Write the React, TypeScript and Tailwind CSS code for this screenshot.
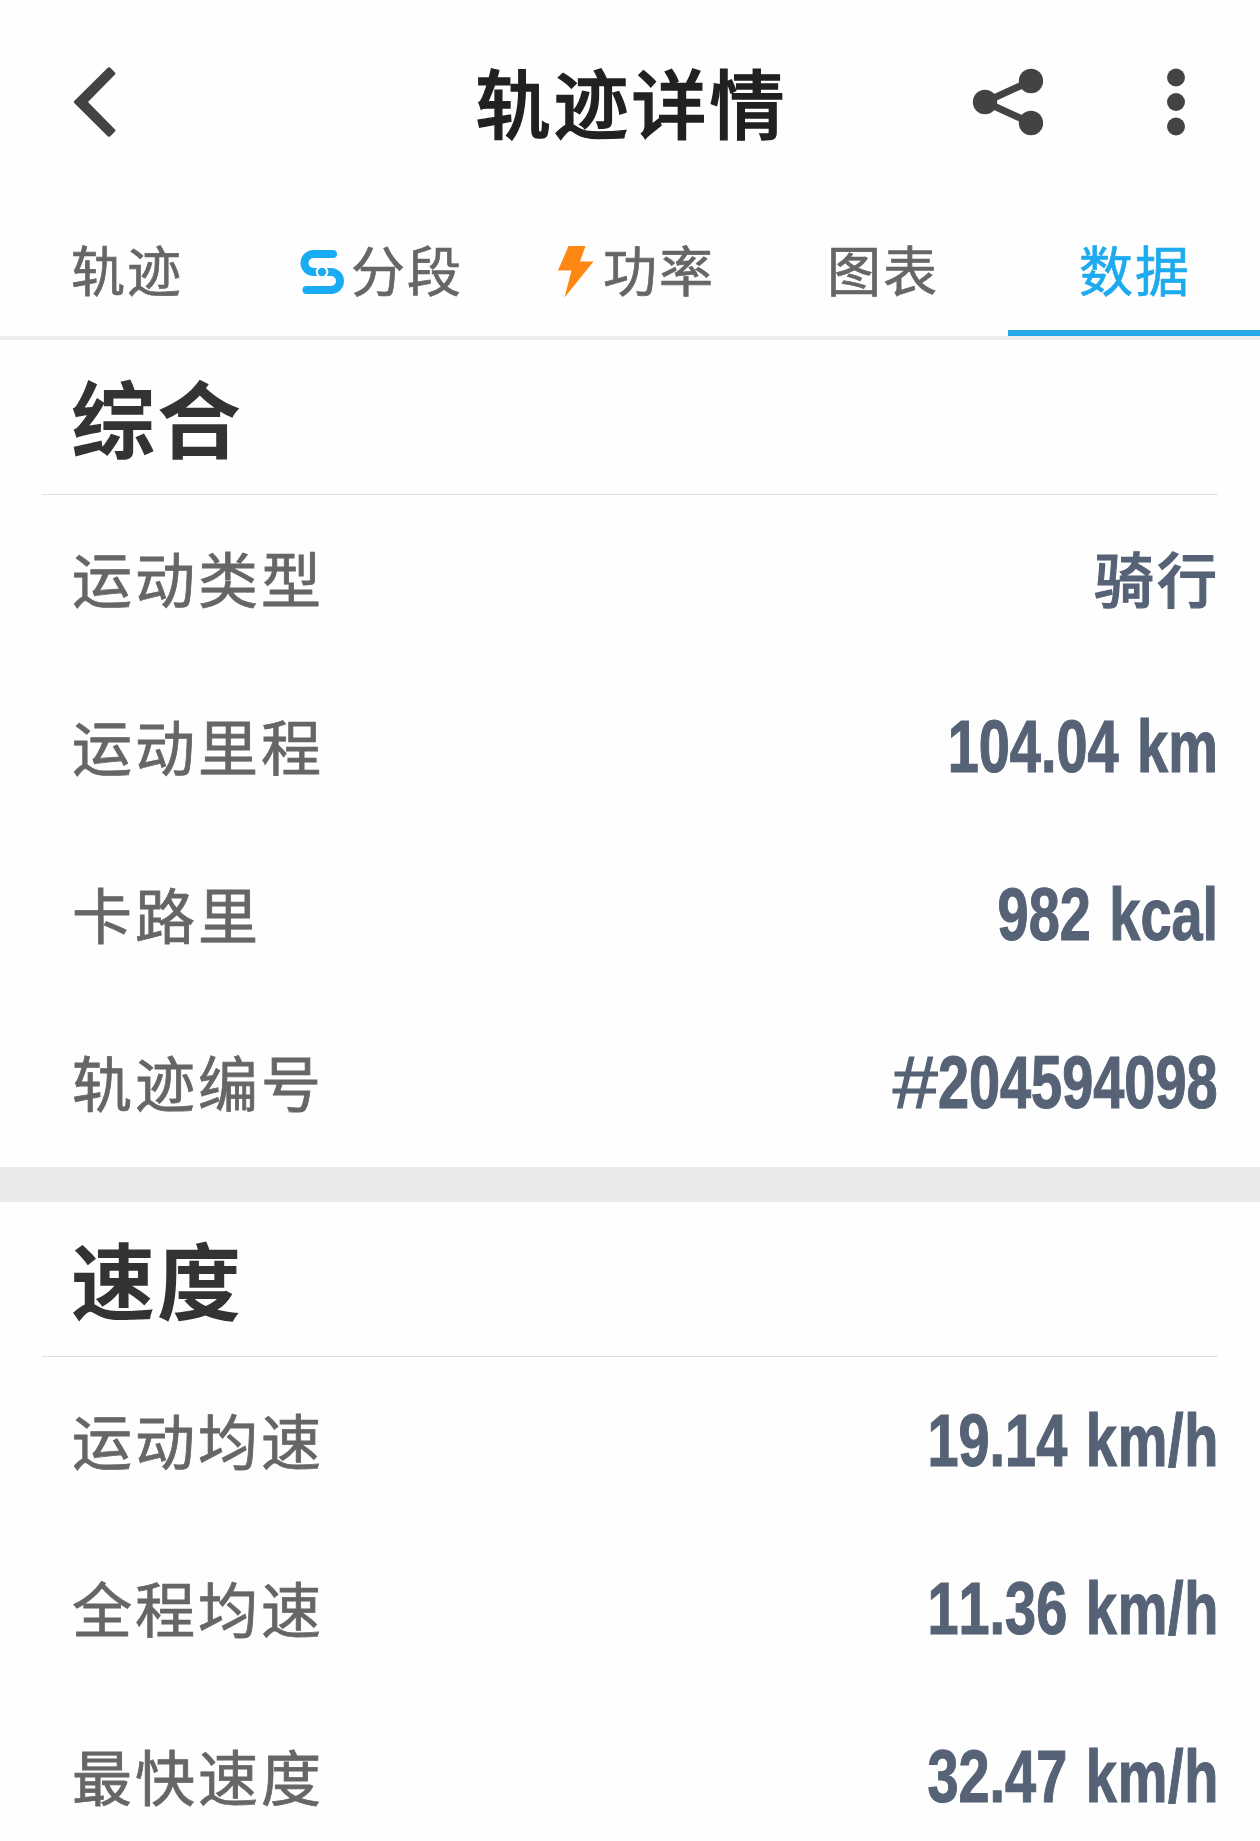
import React from 'react';

interface Stat {
  label: string;
  value: string;
  unit?: string;
}

const SUMMARY: Stat[] = [
  { label: '运动类型', value: '骑行' },
  { label: '运动里程', value: '104.04', unit: 'km' },
  { label: '卡路里', value: '982', unit: 'kcal' },
  { label: '轨迹编号', value: '#204594098' },
];

const SPEED: Stat[] = [
  { label: '运动均速', value: '19.14', unit: 'km/h' },
  { label: '全程均速', value: '11.36', unit: 'km/h' },
  { label: '最快速度', value: '32.47', unit: 'km/h' },
];

const SegmentIcon: React.FC = () => (
  <svg className="w-[54px] h-[54px]" viewBox="0 0 54 54" fill="none">
    <path d="M38 9H18.5a9 9 0 0 0 0 18H27h9a9 9 0 0 1 0 18H11.5" stroke="#1aacf2" strokeWidth="8" strokeLinecap="round" />
    <circle cx="27" cy="27" r="6.3" fill="#fff" />
    <circle cx="27" cy="27" r="4.2" fill="#1aacf2" />
  </svg>
);

const PowerIcon: React.FC = () => (
  <svg className="w-[54px] h-[54px]" viewBox="0 0 54 54">
    <path d="M21.5 1H38.5L33 16.5H46.5L17.5 52.5L24.5 25.5H11Z" fill="#ff8714" />
  </svg>
);

const TABS = [
  { label: '轨迹' },
  { label: '分段', icon: <SegmentIcon /> },
  { label: '功率', icon: <PowerIcon /> },
  { label: '图表' },
  { label: '数据', active: true },
];

const Header: React.FC = () => (
  <header className="grid grid-cols-3 items-center h-[204px] px-[72px]">
    <button className="w-fit">
      <svg className="w-[46px] h-[72px]" viewBox="0 0 46 72" fill="#434343">
        <path d="M36 1.6Q37 .7 38 1.6L43 6.6Q44 7.5 43 8.5L16 36L43 63.5Q44 64.5 43 65.4L38 70.4Q37 71.3 36 70.4L2.2 37Q1.2 36 2.2 35Z" />
      </svg>
    </button>
    <h1 className="pb-[4px] pl-[3px] text-center text-[75px] leading-none tracking-[3px] font-medium text-[#212121] whitespace-nowrap [-webkit-text-stroke:1.4px_#212121]">轨迹详情</h1>
    <div className="flex justify-end items-center gap-[121px]">
      <button>
        <svg className="w-[72px] h-[72px]" viewBox="0 0 72 72" fill="#434343">
          <path d="M60 15L14 36L60 57" fill="none" stroke="#434343" strokeWidth="7" />
          <circle cx="14" cy="36" r="12.2" />
          <circle cx="60" cy="15" r="12.2" />
          <circle cx="60" cy="57" r="12.2" />
        </svg>
      </button>
      <button>
        <svg className="w-[24px] h-[72px]" viewBox="0 0 24 72" fill="#434343">
          <circle cx="12" cy="11.5" r="9" />
          <circle cx="12" cy="36" r="9" />
          <circle cx="12" cy="60.5" r="9" />
        </svg>
      </button>
    </div>
  </header>
);

const StatValue: React.FC<{ value: string; unit?: string }> = ({ value, unit }) => {
  if (!/^[#\d]/.test(value)) {
    return (
      <span className="-mr-[2px] pb-[4px] text-[60px] leading-none tracking-[3px] font-medium text-[#566276] [-webkit-text-stroke:1.2px_#566276]">
        {value}
      </span>
    );
  }
  const hasHash = value.startsWith('#');
  return (
    <span className="origin-right scale-x-[0.755] font-['Liberation_Sans',sans-serif] text-[74px] leading-none font-bold whitespace-nowrap text-[#566276] [font-kerning:none] [word-spacing:4px] [-webkit-text-stroke:1.2px_#566276]">
      {hasHash && <span className="inline-block origin-right scale-x-[1.45] font-normal">#</span>}
      {hasHash ? value.slice(1) : value}
      {unit && ' '}
      {unit && <span className={unit === 'km/h' ? 'tracking-[1px] -mr-[1px]' : ''}>{unit}</span>}
    </span>
  );
};

const Section: React.FC<{ title: string; stats: Stat[] }> = ({ title, stats }) => (
  <section>
    <div className="mx-[42px] h-[155px] px-[29px] pb-[2px] flex items-center border-b border-[#dcdfdf]">
      <h2 className="text-[84px] leading-none tracking-[2px] font-bold text-[#333333]">{title}</h2>
    </div>
    <ul>
      {stats.map((stat) => (
        <li key={stat.label} className="h-[168px] pl-[72px] pr-[42px] flex items-center justify-between">
          <span className="pb-[4px] text-[60px] leading-none tracking-[3px] text-[#666666] [-webkit-text-stroke:0.8px_#666666]">{stat.label}</span>
          <StatValue value={stat.value} unit={stat.unit} />
        </li>
      ))}
    </ul>
  </section>
);

const App: React.FC = () => {
  return (
    <div className="w-full h-[1841px] overflow-hidden bg-[#fefefe] font-['Noto_Sans_CJK_SC',sans-serif]">
      <Header />
      <nav className="grid grid-cols-5 h-[136px] border-b-4 border-[#ededed]">
        {TABS.map((tab) => (
          <button
            key={tab.label}
            className={`flex items-center justify-center border-b-[6px] pt-2.5 ${tab.icon ? 'pl-[2px]' : ''} ${tab.active ? 'border-[#27a9e9] text-[#1eaaee]' : 'border-transparent text-[#666666]'}`}
          >
            {tab.icon}
            <span className="pl-[2px] pb-[6px] text-[54px] leading-none tracking-[2px] [-webkit-text-stroke:0.7px_currentColor]">{tab.label}</span>
          </button>
        ))}
      </nav>
      <Section title="综合" stats={SUMMARY} />
      <div className="h-[35px] bg-[#eaeaea]" />
      <Section title="速度" stats={SPEED} />
    </div>
  );
};

export default App;
